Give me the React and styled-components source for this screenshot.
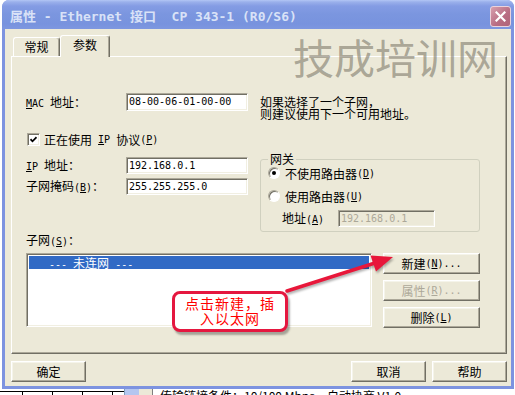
import styled, { createGlobalStyle } from 'styled-components'

const cjk = '"Noto Sans CJK SC", "Noto Sans", sans-serif'
const mono = '"DejaVu Sans Mono", "Noto Sans CJK SC", monospace'

const GlobalStyle = createGlobalStyle`
  html, body {
    margin: 0;
    padding: 0;
    background: #fff;
  }
  body {
    font-family: ${cjk};
    font-size: 12px;
    color: #000;
  }
`

const Desktop = styled.div`
  position: relative;
  width: 515px;
  height: 395px;
  overflow: hidden;
  font-family: ${cjk};
  font-size: 12px;
`

// what shows of the page behind the dialog
const Backdrop = styled.div`
  height: 100%;
  display: flex;
  flex-direction: column;
  justify-content: flex-end;
`

const BackStrip = styled.div`
  height: 6px;
  display: flex;
  overflow: hidden;
`

const BackGrid = styled.div`
  width: 124px;
  border-top: 1px solid #000;
  margin-top: 2px;
  background: repeating-linear-gradient(90deg, transparent 0 22px, #000 22px 23px, transparent 23px 30px);
`

const BackThumb = styled.div`
  width: 14px;
  background: #B4C6F0;
  border-left: 1px solid #7F9DB9;
`

const BackGap = styled.div`
  width: 13px;
  background: #ECE9D8;
  border-right: 1px solid #808080;
`

const BackText = styled.div`
  margin-left: 7px;
  padding-top: 1px;
  line-height: 12px;
  white-space: nowrap;
`

const Window = styled.div`
  position: absolute;
  left: 2px;
  top: 0;
  width: 512px;
  height: 389px;
  display: flex;
  flex-direction: column;
  background: #7D93E0;
  border-radius: 7px 7px 0 0;
`

const TitleBar = styled.div`
  height: 29px;
  flex: none;
  display: flex;
  align-items: center;
  padding-left: 8px;
  border-radius: 7px 7px 0 0;
  background: linear-gradient(to bottom, #B3C6F5 0px, #9AB0EB 2px, #849CE4 6px, #7B96DF 14px, #7893DE 24px, #7E97E0 29px);
`

const TitleText = styled.span`
  flex: 1;
  font-family: ${mono};
  font-weight: bold;
  font-size: 13px;
  color: #D9E2F7;
  white-space: pre;
  margin-top: 2px;
`

const CloseBox = styled.div`
  align-self: flex-start;
  margin: 6px 3px 0 0;
  width: 21px;
  height: 21px;
  box-sizing: border-box;
  border: 1px solid #EAD3DC;
  border-radius: 3px;
  background: linear-gradient(135deg, #D7A0AE, #B86C82 60%, #B06479);
  display: flex;
  align-items: center;
  justify-content: center;
`

const Body = styled.div`
  flex: 1;
  margin: 0 3px 3px;
  background: #ECE9D8;
  padding: 6px 4px 0 6px;
  display: flex;
  flex-direction: column;
`

const TabStrip = styled.div`
  height: 22px;
  display: flex;
  align-items: flex-end;
  padding-left: 2px;
  margin-bottom: -1px;
  position: relative;
  z-index: 1;
`

const Tab = styled.div`
  box-sizing: border-box;
  width: ${p => p.$w}px;
  height: ${p => (p.$on ? 22 : 19)}px;
  margin-bottom: ${p => (p.$on ? 0 : 1)}px;
  border: 1px solid;
  border-color: #fff #716F64 transparent #fff;
  border-bottom: none;
  border-radius: 3px 3px 0 0;
  box-shadow: inset -1px 0 #ACA899;
  background: #ECE9D8;
  display: flex;
  align-items: center;
  justify-content: center;
  padding-bottom: ${p => (p.$on ? 3 : 0)}px;
  line-height: 12px;
`

const Panel = styled.div`
  flex: none;
  height: 298px;
  box-sizing: border-box;
  border: 1px solid;
  border-color: #fff #716F64 #716F64 #fff;
  box-shadow: inset -1px -1px #ACA899;
  padding-left: 14px;
  display: flex;
  flex-direction: column;
`

const Lat = styled.span`
  font-family: ${mono};
  font-size: 10px;
  white-space: pre;
`

const Key = styled.span`
  text-decoration: underline;
`

const MacRow = styled.div`
  margin-top: 36px;
  display: flex;
  align-items: flex-start;
`

const FieldLabel = styled.div`
  width: ${p => p.$w || 100}px;
  flex: none;
  line-height: 17px;
  white-space: nowrap;
`

const TextBox = styled.div`
  width: ${p => p.$w}px;
  height: ${p => p.$h || 17}px;
  flex: none;
  box-sizing: border-box;
  border: 1px solid;
  border-color: #ACA899 #fff #fff #ACA899;
  box-shadow: inset 1px 1px #716F64, inset -1px -1px #F1EFE2;
  background: ${p => (p.$off ? '#ECE9D8' : '#fff')};
  color: ${p => (p.$off ? '#ACA899' : '#000')};
  font-family: ${mono};
  font-size: 10px;
  line-height: ${p => (p.$h || 17) - 2}px;
  padding-left: 2px;
  white-space: pre;
`

const Hint = styled.div`
  margin: 3px 0 0 12px;
  line-height: 12px;
`

const CheckRow = styled.div`
  margin-top: 13px;
  height: 13px;
  display: flex;
  align-items: center;
  padding-left: 1px;
`

const CheckBox = styled.span`
  width: 13px;
  height: 13px;
  box-sizing: border-box;
  background: #fff;
  border: 1px solid;
  border-color: #ACA899 #fff #fff #ACA899;
  box-shadow: inset 1px 1px #716F64, inset -1px -1px #F1EFE2;
  display: flex;
  align-items: center;
  justify-content: center;
  margin-right: 4px;
`

const MidRow = styled.div`
  margin-top: 7px;
  display: flex;
  align-items: flex-start;
`

const IpColumn = styled.div`
  width: 222px;
  margin-top: 3px;
  display: flex;
  flex-direction: column;
  gap: 2px;
`

const FieldRow = styled.div`
  display: flex;
  align-items: center;
`

const GroupBox = styled.fieldset`
  margin: 0 0 0 12px;
  padding: 0 8px 3px 7px;
  width: 220px;
  box-sizing: border-box;
  min-width: 0;
  border: 1px solid #D0D0BF;
  border-radius: 3px;
`

const Legend = styled.legend`
  padding: 0 2px;
  line-height: 12px;
  font-size: 12px;
`

const RadioRow = styled.div`
  display: flex;
  align-items: center;
  height: 12px;
  margin-top: ${p => p.$gap}px;
`

const Radio = styled.span`
  width: 12px;
  height: 12px;
  border-radius: 50%;
  box-sizing: border-box;
  background: #fff;
  border: 1px solid;
  border-color: #ACA899 #fff #fff #ACA899;
  box-shadow: inset 1px 1px #716F64;
  display: flex;
  align-items: center;
  justify-content: center;
  margin-right: 5px;

  &::after {
    content: '';
    width: 4px;
    height: 4px;
    border-radius: 50%;
    background: ${p => (p.$on ? '#000' : 'transparent')};
  }
`

const AddrRow = styled.div`
  display: flex;
  align-items: center;
  margin: 7px 0 0 14px;
`

const SubnetLabel = styled.div`
  margin-top: 2px;
  line-height: 12px;
`

const ListRow = styled.div`
  margin-top: 5px;
  display: flex;
  align-items: flex-start;
`

const ListBox = styled.div`
  width: 346px;
  height: 74px;
  box-sizing: border-box;
  border: 1px solid;
  border-color: #ACA899 #fff #fff #ACA899;
  box-shadow: inset 1px 1px #716F64, inset -1px -1px #F1EFE2;
  background: #fff;
  padding: 2px 2px 0 2px;
`

const ListItem = styled.div`
  height: 13px;
  line-height: 13px;
  background: ${p => (p.$sel ? '#316AC5' : 'transparent')};
  color: ${p => (p.$sel ? '#fff' : '#000')};
  padding-left: 20px;
  white-space: pre;
`

const ButtonColumn = styled.div`
  margin-left: 11px;
  display: flex;
  flex-direction: column;
  gap: 6px;
`

const Button = styled.div`
  width: ${p => p.$w || 97}px;
  height: 21px;
  box-sizing: border-box;
  border: 1px solid;
  border-color: #fff #716F64 #716F64 #fff;
  box-shadow: inset -1px -1px #ACA899, inset 1px 1px #F5F4EA;
  background: #ECE9D8;
  color: ${p => (p.$off ? '#ACA899' : '#000')};
  display: flex;
  align-items: center;
  justify-content: center;
  line-height: 12px;
  white-space: pre;
`

const Footer = styled.div`
  margin-top: 7px;
  display: flex;
  gap: 6px;
`

const Spacer = styled.div`
  flex: 1;
`

const Watermark = styled.div`
  position: absolute;
  left: 293px;
  top: 36px;
  font-size: 41px;
  line-height: 41px;
  height: 41px;
  color: rgba(128, 122, 108, 0.62);
  white-space: nowrap;
  pointer-events: none;
`

const Arrow = styled.svg`
  position: absolute;
  left: 280px;
  top: 250px;
  overflow: visible;
  filter: drop-shadow(1px 2px 1px rgba(0, 0, 0, 0.3));
`

const Callout = styled.div`
  position: absolute;
  left: 172px;
  top: 291px;
  width: 116px;
  height: 41px;
  box-sizing: border-box;
  border: 3px solid #E5173F;
  border-radius: 8px;
  background: #fff;
  box-shadow: 2px 3px 2px rgba(0, 0, 0, 0.3);
  color: #FF0000;
  font-size: 14px;
  line-height: 15px;
  letter-spacing: 1px;
  text-align: center;
  padding-top: 2px;
`

function App() {
  return (
    <>
      <GlobalStyle />
      <Desktop>
        <Backdrop>
          <BackStrip>
            <BackGrid />
            <BackThumb />
            <BackGap />
            <BackText>传输链接条件：10/100 Mbps，自动协商 V1.0</BackText>
          </BackStrip>
        </Backdrop>

        <Window>
          <TitleBar>
            <TitleText>属性 - Ethernet 接口  CP 343-1 (R0/S6)</TitleText>
            <CloseBox>
              <svg width="11" height="11" viewBox="0 0 11 11">
                <path d="M1.5 1.5 L9.5 9.5 M9.5 1.5 L1.5 9.5" stroke="#fff" strokeWidth="2.2" strokeLinecap="square" />
              </svg>
            </CloseBox>
          </TitleBar>

          <Body>
            <TabStrip>
              <Tab $w={47}>常规</Tab>
              <Tab $w={50} $on>参数</Tab>
            </TabStrip>

            <Panel>
              <MacRow>
                <FieldLabel $w={100}><Lat><Key>M</Key>AC </Lat>地址：</FieldLabel>
                <TextBox $w={122} $h={18}>08-00-06-01-00-00</TextBox>
                <Hint>
                  如果选择了一个子网，<br />
                  则建议使用下一个可用地址。
                </Hint>
              </MacRow>

              <CheckRow>
                <CheckBox>
                  <svg width="7" height="7" viewBox="0 0 7 7">
                    <polyline points="0.5,3.2 2.5,5.3 6.5,1.2" fill="none" stroke="#000" strokeWidth="1.7" />
                  </svg>
                </CheckBox>
                正在使用<Lat> <Key>I</Key>P </Lat>协议<Lat>(<Key>P</Key>)</Lat>
              </CheckRow>

              <MidRow>
                <IpColumn>
                  <FieldRow>
                    <FieldLabel $w={100}><Lat><Key>I</Key>P </Lat>地址：</FieldLabel>
                    <TextBox $w={122}>192.168.0.1</TextBox>
                  </FieldRow>
                  <FieldRow>
                    <FieldLabel $w={100}>子网掩码<Lat>(<Key>B</Key>)</Lat>：</FieldLabel>
                    <TextBox $w={122}>255.255.255.0</TextBox>
                  </FieldRow>
                </IpColumn>

                <GroupBox>
                  <Legend>网关</Legend>
                  <RadioRow $gap={2}>
                    <Radio $on />
                    不使用路由器<Lat>(<Key>D</Key>)</Lat>
                  </RadioRow>
                  <RadioRow $gap={11}>
                    <Radio />
                    使用路由器<Lat>(<Key>U</Key>)</Lat>
                  </RadioRow>
                  <AddrRow>
                    <FieldLabel $w={56}>地址<Lat>(<Key>A</Key>)</Lat></FieldLabel>
                    <TextBox $w={97} $off>192.168.0.1</TextBox>
                  </AddrRow>
                </GroupBox>
              </MidRow>

              <SubnetLabel>子网<Lat>(<Key>S</Key>)</Lat>：</SubnetLabel>

              <ListRow>
                <ListBox>
                  <ListItem $sel><Lat>--- </Lat>未连网<Lat> ---</Lat></ListItem>
                </ListBox>
                <ButtonColumn>
                  <Button>新建<Lat>(<Key>N</Key>)...</Lat></Button>
                  <Button $off>属性<Lat>(<Key>R</Key>)...</Lat></Button>
                  <Button>删除<Lat>(<Key>L</Key>)</Lat></Button>
                </ButtonColumn>
              </ListRow>
            </Panel>

            <Footer>
              <Button $w={75}>确定</Button>
              <Spacer />
              <Button $w={75}>取消</Button>
              <Button $w={75}>帮助</Button>
            </Footer>
          </Body>
        </Window>

        <Watermark>技成培训网</Watermark>

        <Arrow width="120" height="50" viewBox="0 0 120 50">
          <line x1="7" y1="41" x2="95" y2="13" stroke="#E8173A" strokeWidth="3.5" strokeLinecap="round" />
          <polygon points="113,7 96,21.5 90.5,5.5" fill="#E8173A" />
        </Arrow>

        <Callout>
          点击新建，插<br />
          入以太网
        </Callout>
      </Desktop>
    </>
  )
}

export default App
